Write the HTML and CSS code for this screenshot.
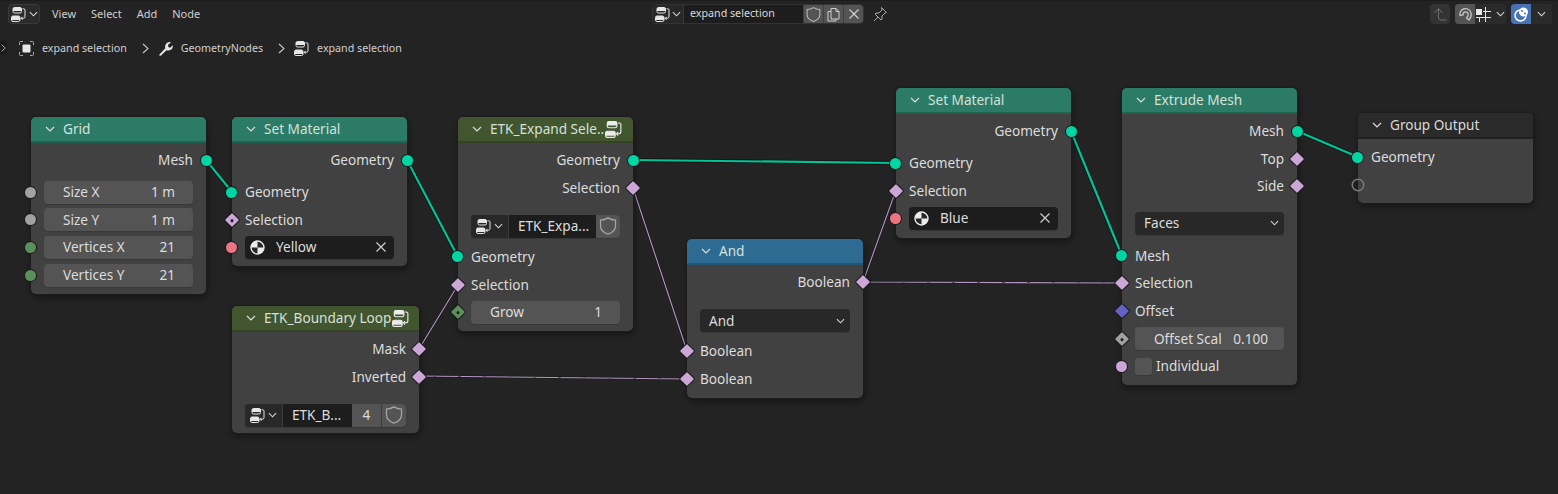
FILE: index.html
```html
<!DOCTYPE html>
<html lang="en">
<head>
<meta charset="utf-8">
<title>expand selection</title>
<link rel="stylesheet" href="styles.css">
</head>
<body>
<svg class="defs" width="0" height="0" aria-hidden="true">
  <symbol id="i-tree" viewBox="0 0 15 15">
    <rect x="2" y="0.5" width="8.5" height="5.5" rx="1.5" fill="none" stroke="currentColor"/>
    <path d="M2 4V2a1.500 1.500 0 0 1 1.500-1.500h5.500A1.500 1.500 0 0 1 10.500 2v2z" fill="currentColor"/>
    <rect x="0.500" y="9" width="8.500" height="5.500" rx="1.500" fill="none" stroke="currentColor"/>
    <path d="M0.500 13V10.500A1.500 1.500 0 0 1 2 9h5.500A1.500 1.500 0 0 1 9 10.500V13z" fill="currentColor"/>
    <path d="M11.500 1.800h1.200a1.300 1.300 0 0 1 1.300 1.300v6.400a1.800 1.800 0 0 1-1.800 1.800h-2M11.500 9.800l-1.300 1.500 1.300 1.500" fill="none" stroke="currentColor" stroke-width="1"/>
  </symbol>
  <symbol id="i-shield" viewBox="0 0 16 16">
    <path d="M8 1.500c2 1.300 4 1.800 6 1.800v4.700c0 3-2.500 5.300-6 6.500-3.500-1.200-6-3.500-6-6.500V3.300c2 0 4-.5 6-1.800z" fill="none" stroke="currentColor" stroke-width="1"/>
  </symbol>
  <symbol id="i-x" viewBox="0 0 12 12">
    <path d="M1.500 1.500l9 9M10.500 1.500l-9 9" fill="none" stroke="currentColor" stroke-width="1.200"/>
  </symbol>
  <symbol id="i-chev" viewBox="0 0 10 6">
    <path d="M1 1l4 4 4-4" fill="none" stroke="currentColor" stroke-width="1.200"/>
  </symbol>
  <symbol id="i-crumb" viewBox="0 0 7 11">
    <path d="M1 1l5 4.500-5 4.500" fill="none" stroke="currentColor" stroke-width="1.100"/>
  </symbol>
  <symbol id="i-mat" viewBox="0 0 15 15">
    <circle cx="7.500" cy="7.500" r="6.600" fill="#ededed" stroke="#ededed" stroke-width="1.200"/>
    <path d="M7.500 1.700a5.800 5.800 0 0 1 5.800 5.800H7.500zM7.500 7.500v5.800a5.800 5.800 0 0 1-5.800-5.800z" fill="#262626"/>
  </symbol>
</svg>

<header class="topbar">
  <div class="top-left">
    <div class="editor-btn">
      <svg class="ic15"><use href="#i-tree"/></svg>
      <svg class="ic-chev"><use href="#i-chev"/></svg>
    </div>
    <nav class="menu">
      <span>View</span><span>Select</span><span>Add</span><span>Node</span>
    </nav>
  </div>
  <div class="top-center">
    <div class="id-group">
      <div class="id-type"><svg class="ic15"><use href="#i-tree"/></svg><svg class="ic-chev"><use href="#i-chev"/></svg></div>
      <div class="id-name">expand selection</div>
      <div class="id-btn"><svg class="ic-shield-top"><use href="#i-shield"/></svg></div>
      <div class="id-btn">
        <svg class="ic15" viewBox="0 0 15 15"><path d="M5 1.500h5l3 3v7.500H5zM10 1.500v3h3M5 4.500H2v9.500h8v-2" fill="none" stroke="currentColor"/></svg>
      </div>
      <div class="id-btn"><svg class="ic-x"><use href="#i-x"/></svg></div>
    </div>
    <svg class="pin" viewBox="0 0 16 16"><path d="M9.500 1.500l5 5-1.500.5-3 3 0 3-1 1-3-3-4 4 4-4-3-3 1-1 3 0 3-3z" fill="none" stroke="currentColor"/></svg>
  </div>
  <div class="top-right">
    <div class="tool tool-off">
      <svg class="ic15" viewBox="0 0 15 15"><path d="M1.500 6l4-4.500 4 4.500M5.500 2v8.500a2.500 2.500 0 0 0 2.500 2.500h5.500" fill="none" stroke="currentColor"/></svg>
    </div>
    <div class="tool-group">
      <div class="tool tool-on">
        <svg class="ic15" viewBox="0 0 15 15"><path d="M2 8.500A5.500 5.500 0 0 1 13 6c.6 2.500-.3 5-2 7l-2.500-2c1.500-1.500 2-3 1.700-4.300A2.700 2.700 0 0 0 5 8z" fill="none" stroke="currentColor" stroke-width="1.400"/></svg>
      </div>
      <div class="tool tool-snap">
        <svg class="ic15" viewBox="0 0 15 15"><rect x="0" y="2" width="6" height="6" fill="#e8e8e8"/><path d="M9.500 0v15M3.500 10v5M0 10.500h15M7 4.500h8" fill="none" stroke="currentColor"/></svg>
        <svg class="ic-chev"><use href="#i-chev"/></svg>
      </div>
    </div>
    <div class="tool-group">
      <div class="tool tool-blue">
        <svg class="ic15" viewBox="0 0 15 15"><circle cx="6.500" cy="8.500" r="5.500" fill="none" stroke="#fff" stroke-width="1.500"/><circle cx="9.500" cy="5" r="4.500" fill="#fff"/><circle cx="8" cy="4" r="1" fill="#4772b3"/><circle cx="11" cy="6.500" r="1" fill="#4772b3"/></svg>
      </div>
      <div class="tool tool-chev"><svg class="ic-chev"><use href="#i-chev"/></svg></div>
    </div>
  </div>
</header>

<main class="canvas">
  <div class="side-tab"><svg class="ic-crumb-s"><use href="#i-crumb"/></svg></div>
  <div class="crumbs">
    <svg class="ic15 c-obj" viewBox="0 0 15 15"><rect x="3.500" y="3.500" width="8" height="8" rx="1" fill="currentColor"/><path d="M.5 4V1.500a1 1 0 0 1 1-1H4M11 .5h2.500a1 1 0 0 1 1 1V4M14.500 11v2.500a1 1 0 0 1-1 1H11M4 14.500H1.500a1 1 0 0 1-1-1V11" fill="none" stroke="#aaa"/></svg>
    <span class="c-text">expand selection</span>
    <svg class="ic-crumb"><use href="#i-crumb"/></svg>
    <svg class="ic15" viewBox="0 0 15 15"><path d="M1 14l6.300-6.700c-.6-2.200.1-4 1.600-5.300 1.300-1 2.800-1.300 4-.8L10 4.100l.3 2 1.800.6 2.600-2.500c.4 1.700-.2 3.300-1.500 4.400-1.300 1-3 1.300-4.700.7L3 14.500c-.7.500-1.500.3-2-.5z" fill="currentColor"/></svg>
    <span class="c-text">GeometryNodes</span>
    <svg class="ic-crumb"><use href="#i-crumb"/></svg>
    <svg class="ic15"><use href="#i-tree"/></svg>
    <span class="c-text">expand selection</span>
  </div>

  <svg class="links" viewBox="0 27 1558 467" width="1558" height="467" aria-hidden="true">
    <g class="wire-out">
      <path d="M206 160L232 192M407 160L458 257M633 160L896 163M1071 131L1122 256M1297 131L1358 157"/>
    </g>
    <g class="wire-green">
      <path d="M206 160L232 192M407 160L458 257M633 160L896 163M1071 131L1122 256M1297 131L1358 157"/>
    </g>
    <g class="wire-out-thin">
      <path d="M419 349L458 285M633 188L687 351M419 376L687 379M863 282L896 190M863 282L1122 283"/>
    </g>
    <g class="wire-bool">
      <path d="M419 349L458 285M633 188L687 351M419 376L687 379M863 282L896 190M863 282L1122 283"/>
    </g>
    <g class="wire-dash">
      <path d="M419 376L687 379M863 282L1122 283"/>
    </g>
  </svg>

  <section class="node n-grid">
    <div class="node-head geo"><svg class="ic-head"><use href="#i-chev"/></svg><span class="title">Grid</span></div>
    <div class="node-body">
      <div class="row out"><span>Mesh</span><i class="sock s-geo"></i></div>
      <div class="gap-4"></div>
      <div class="row"><i class="sock s-float"></i><div class="field"><span>Size X</span><span>1 m</span></div></div>
      <div class="row"><i class="sock s-float"></i><div class="field"><span>Size Y</span><span>1 m</span></div></div>
      <div class="row"><i class="sock s-int"></i><div class="field"><span>Vertices X</span><span>21</span></div></div>
      <div class="row"><i class="sock s-int"></i><div class="field"><span>Vertices Y</span><span>21</span></div></div>
    </div>
  </section>

  <section class="node n-mat1">
    <div class="node-head geo"><svg class="ic-head"><use href="#i-chev"/></svg><span class="title">Set Material</span></div>
    <div class="node-body">
      <div class="row out"><span>Geometry</span><i class="sock s-geo"></i></div>
      <div class="gap-4"></div>
      <div class="row"><i class="sock s-geo"></i><span>Geometry</span></div>
      <div class="row"><i class="sock s-bool dot"></i><span>Selection</span></div>
      <div class="row"><i class="sock s-mat"></i><div class="field-mat"><svg class="ic-mat"><use href="#i-mat"/></svg><span class="grow">Yellow</span><svg class="ic-x"><use href="#i-x"/></svg></div></div>
    </div>
  </section>

  <section class="node n-expand">
    <div class="node-head grp"><svg class="ic-head"><use href="#i-chev"/></svg><span class="title">ETK_Expand Sele..</span><svg class="ic-grp"><use href="#i-tree"/></svg></div>
    <div class="node-body">
      <div class="row out"><span>Geometry</span><i class="sock s-geo"></i></div>
      <div class="row out"><span>Selection</span><i class="sock s-bool"></i></div>
      <div class="gap-11"></div>
      <div class="row">
        <div class="grp-sel">
          <div class="gs-type"><svg class="ic15"><use href="#i-tree"/></svg><svg class="ic-chev"><use href="#i-chev"/></svg></div>
          <div class="gs-name">ETK_Expa...</div>
          <div class="gs-btn"><svg class="ic-shield"><use href="#i-shield"/></svg></div>
        </div>
      </div>
      <div class="gap-3"></div>
      <div class="row"><i class="sock s-geo"></i><span>Geometry</span></div>
      <div class="row"><i class="sock s-bool"></i><span>Selection</span></div>
      <div class="row"><i class="sock s-int dot"></i><div class="field"><span>Grow</span><span>1</span></div></div>
    </div>
  </section>

  <section class="node n-boundary">
    <div class="node-head grp"><svg class="ic-head"><use href="#i-chev"/></svg><span class="title">ETK_Boundary Loop</span><svg class="ic-grp"><use href="#i-tree"/></svg></div>
    <div class="node-body">
      <div class="row out"><span>Mask</span><i class="sock s-bool"></i></div>
      <div class="row out"><span>Inverted</span><i class="sock s-bool"></i></div>
      <div class="gap-11"></div>
      <div class="row">
        <div class="grp-sel">
          <div class="gs-type"><svg class="ic15"><use href="#i-tree"/></svg><svg class="ic-chev"><use href="#i-chev"/></svg></div>
          <div class="gs-name">ETK_B...</div>
          <div class="gs-count">4</div>
          <div class="gs-btn"><svg class="ic-shield"><use href="#i-shield"/></svg></div>
        </div>
      </div>
    </div>
  </section>

  <section class="node n-and">
    <div class="node-head cvt"><svg class="ic-head"><use href="#i-chev"/></svg><span class="title">And</span></div>
    <div class="node-body">
      <div class="row out"><span>Boolean</span><i class="sock s-bool"></i></div>
      <div class="gap-11"></div>
      <div class="row"><div class="drop"><span>And</span><svg class="ic-chev"><use href="#i-chev"/></svg></div></div>
      <div class="gap-3"></div>
      <div class="row"><i class="sock s-bool"></i><span>Boolean</span></div>
      <div class="row"><i class="sock s-bool"></i><span>Boolean</span></div>
    </div>
  </section>

  <section class="node n-mat2">
    <div class="node-head geo"><svg class="ic-head"><use href="#i-chev"/></svg><span class="title">Set Material</span></div>
    <div class="node-body">
      <div class="row out"><span>Geometry</span><i class="sock s-geo"></i></div>
      <div class="gap-4"></div>
      <div class="row"><i class="sock s-geo"></i><span>Geometry</span></div>
      <div class="row"><i class="sock s-bool"></i><span>Selection</span></div>
      <div class="row"><i class="sock s-mat"></i><div class="field-mat"><svg class="ic-mat"><use href="#i-mat"/></svg><span class="grow">Blue</span><svg class="ic-x"><use href="#i-x"/></svg></div></div>
    </div>
  </section>

  <section class="node n-extrude">
    <div class="node-head geo"><svg class="ic-head"><use href="#i-chev"/></svg><span class="title">Extrude Mesh</span></div>
    <div class="node-body">
      <div class="row out"><span>Mesh</span><i class="sock s-geo"></i></div>
      <div class="row out"><span>Top</span><i class="sock s-bool"></i></div>
      <div class="row out"><span>Side</span><i class="sock s-bool"></i></div>
      <div class="gap-9"></div>
      <div class="row"><div class="drop"><span>Faces</span><svg class="ic-chev"><use href="#i-chev"/></svg></div></div>
      <div class="gap-4"></div>
      <div class="row"><i class="sock s-geo"></i><span>Mesh</span></div>
      <div class="row"><i class="sock s-bool"></i><span>Selection</span></div>
      <div class="row"><i class="sock s-vec"></i><span>Offset</span></div>
      <div class="row"><i class="sock s-float-d dot"></i><div class="field field-tight"><span>Offset Scal</span><span>0.100</span></div></div>
      <div class="row"><i class="sock s-boolc"></i><i class="check"></i><span>Individual</span></div>
    </div>
  </section>

  <section class="node n-output">
    <div class="node-head out-head"><svg class="ic-head"><use href="#i-chev"/></svg><span class="title">Group Output</span></div>
    <div class="node-body body-low">
      <div class="row"><i class="sock s-geo"></i><span>Geometry</span></div>
      <div class="row"><i class="sock s-empty"></i></div>
    </div>
  </section>
</main>
</body>
</html>
```

FILE: styles.css
```css
* { box-sizing: border-box; }
html, body { margin: 0; height: 100%; }
body {
  width: 1558px; height: 494px; overflow: hidden;
  background: #232323; color: #d9d9d9;
  font-family: "Noto Sans", "Open Sans", sans-serif; font-size: 13.600px;
}
svg { display: block; flex: none; }
.defs { position: absolute; }
.ic15 { width: 15px; height: 15px; color: #e6e6e6; }
.ic-chev { width: 9px; height: 6px; color: #d8d8d8; }
.ic-x { width: 12px; height: 12px; color: #cfcfcf; }

/* top bar */
.topbar {
  height: 27px; display: flex; align-items: center; justify-content: space-between;
  background: #232323; border-top: 1px solid #1c1c1c; font-size: 10.700px; color: #cfcfcf;
}
.top-left, .top-right { flex: 1; display: flex; align-items: center; }
.top-left { padding-left: 8px; }
.top-right { justify-content: flex-end; padding-right: 6px; gap: 5px; }
.editor-btn {
  width: 32px; height: 20px; display: flex; align-items: center; justify-content: center; gap: 3px;
  background: #2b2b2b; border: 1px solid #3a3a3a; border-radius: 4px;
}
.menu { display: flex; gap: 15px; margin-left: 12px; font-size: 11px; }
.menu span { margin-bottom: 2px; }
.top-center { display: flex; align-items: center; padding-right: 20px; }
.id-group {
  display: flex; height: 20px; width: 212px; border-radius: 4px; overflow: hidden;
  border: 1px solid #333; background: #1d1d1d;
}
.id-type {
  width: 31px; display: flex; align-items: center; justify-content: center; gap: 2px;
  background: #282828; border-right: 1px solid #3a3a3a;
}
.id-name { flex: 1; padding-left: 6px; line-height: 17px; color: #d9d9d9; }
.id-btn {
  width: 20px; display: flex; align-items: center; justify-content: center; background: #545454;
  border-left: 1px solid #3f3f3f;
}
.id-btn .ic15 { color: #cfcfcf; }
.ic-shield-top { width: 17px; height: 17px; color: #b8b8b8; }
.pin { width: 16px; height: 16px; margin-left: 8px; color: #a8a8a8; }
.tool-group { display: flex; border-radius: 4px; overflow: hidden; box-shadow: inset 0 0 0 1px #383838; }
.tool {
  height: 20px; display: flex; align-items: center; justify-content: center; gap: 5px;
  background: #2b2b2b;
}
.tool-off { width: 20px; background: #333; border-radius: 4px; }
.tool-off .ic15 { color: #6e6e6e; }
.tool-on { width: 20px; background: #545454; }
.tool-on .ic15 { color: #bdbdbd; }
.tool-snap { width: 31px; }
.tool-blue { width: 20px; background: #4772b3; }
.tool-chev { width: 21px; }

/* canvas */
.canvas { position: relative; width: 1558px; height: 467px; }
.side-tab {
  position: absolute; left: 0; top: 14px; width: 7px; height: 14px; background: #1c1c1c;
  border-radius: 0 3px 3px 0; display: flex; align-items: center;
}
.ic-crumb-s { width: 5px; height: 8px; margin-left: 1px; color: #c8c8c8; }
.crumbs {
  position: absolute; left: 19px; top: 13px; height: 16px; display: flex; align-items: center;
  font-size: 10.700px; color: #d0d0d0;
}
.c-text { margin: 0 0 0 8px; }
.ic-crumb { width: 7px; height: 11px; margin: 0 9px 0 15px; color: #c8c8c8; }
.links { position: absolute; left: 0; top: 0; fill: none; }
.wire-out { stroke: #151515; stroke-width: 4; }
.wire-green { stroke: #00c496; stroke-width: 2.200; }
.wire-out-thin { stroke: #1a1a1a; stroke-width: 2.400; }
.wire-bool { stroke: #b597c5; stroke-width: 1.100; }
.wire-dash { stroke: #5c4e64; stroke-width: 1.100; stroke-dasharray: 3 22; stroke-dashoffset: -14; }

/* nodes */
.node {
  position: absolute; background: #414141; border-radius: 5px;
  box-shadow: 0 0 0 1px #1c1c1c, 1px 3px 6px rgba(0,0,0,.45);
  color: #dcdcdc;
}
.n-grid { left: 31px; top: 90px; width: 175px; height: 177px; }
.n-mat1 { left: 232px; top: 90px; width: 175px; height: 149px; }
.n-expand { left: 458px; top: 90px; width: 175px; height: 214px; }
.n-boundary { left: 232px; top: 279px; width: 187px; height: 127px; }
.n-and { left: 687px; top: 212px; width: 176px; height: 159px; }
.n-mat2 { left: 896px; top: 61px; width: 175px; height: 150px; }
.n-extrude { left: 1122px; top: 61px; width: 175px; height: 297px; }
.n-output { left: 1358px; top: 86px; width: 175px; height: 90px; }

.node-head {
  height: 26px; display: flex; align-items: center; padding-left: 14px;
  border-radius: 5px 5px 0 0; border-bottom: 2px solid rgba(0,0,0,.2); color: #d4e0da;
}
.geo { background: #2b7b66; }
.grp { background: #41552f; }
.cvt { background: #2d6b92; }
.out-head { background: #2a2a2a; color: #d9d9d9; }
.ic-head { width: 10px; height: 6px; color: #dcdcdc; }
.title { margin: 0 0 2px 8px; white-space: nowrap; }
.ic-grp { width: 17px; height: 17px; color: #ececec; position: absolute; right: 11px; top: 4px; }
.n-boundary .ic-grp { right: 10px; }

.node-body { padding: 3.200px 13px 0; }
.body-low { padding-top: 4.500px; }
.row {
  position: relative; height: 27.670px; display: flex; align-items: center;
}
.row.out { justify-content: flex-end; }
.row > span, .field span, .field-mat span, .drop span { margin-bottom: 1px; }
.gap-3 { height: 3px; }
.gap-4 { height: 4.500px; }
.gap-9 { height: 9.500px; }
.gap-11 { height: 11px; }

.sock { position: absolute; top: 50%; width: 11px; height: 11px; margin-top: -5.500px; left: -19px; border-radius: 50%; box-shadow: 0 0 0 1px #1a1a1a; }
.row.out .sock { left: auto; right: -19px; }
.s-geo { background: #00d6a3; }
.s-float { background: #a1a1a1; }
.s-int { background: #5c8f5c; }
.s-mat { background: #eb7582; }
.s-boolc { background: #cca6d6; }
.s-empty { background: transparent; box-shadow: 0 0 0 1.500px #7a7a7a; width: 10px; height: 10px; margin-top: -5px; left: -18px; }
.s-bool, .s-vec, .s-float-d {
  border-radius: 1px; width: 10px; height: 10px; margin-top: -5px; left: -18px; transform: rotate(45deg);
}
.row.out .s-bool { right: -18px; }
.s-bool { background: #cca6d6; }
.s-vec { background: #6363c7; }
.s-float-d { background: #a1a1a1; }
.s-int.dot {
  border-radius: 1px; width: 10px; height: 10px; margin-top: -5px; left: -18px; transform: rotate(45deg);
}
.dot::after {
  content: ""; position: absolute; left: 3.500px; top: 3.500px; width: 3px; height: 3px; border-radius: 50%; background: #1d1d1d;
}

.field {
  flex: 1; height: 23px; background: #545454; border-radius: 4px; display: flex;
  align-items: center; justify-content: space-between; padding: 0 18px 0 19px;
  box-shadow: 0 1px 1px rgba(0,0,0,.15);
}
.field-tight { padding-right: 16px; }
.field-mat {
  flex: 1; height: 23px; background: #1d1d1d; border-radius: 4px; display: flex;
  align-items: center; padding: 0 7px 0 5px; box-shadow: 0 1px 1px rgba(0,0,0,.15);
}
.ic-mat { width: 15px; height: 15px; margin-right: 11px; }
.grow { flex: 1; }
.grp-sel {
  flex: 1; height: 23px; display: flex; border-radius: 4px; overflow: hidden; background: #2b2b2b;
  box-shadow: 0 1px 1px rgba(0,0,0,.15);
}
.gs-type {
  width: 38px; flex: none; display: flex; align-items: center; justify-content: center; gap: 3px; background: #282828;
  border-right: 1px solid #3a3a3a;
}
.gs-name { flex: 1; background: #1d1d1d; line-height: 21px; padding-left: 9px; white-space: nowrap; }
.gs-count { width: 30px; background: #545454; line-height: 21px; text-align: center; border-right: 1px solid #3c3c3c; }
.gs-btn { width: 24px; flex: none; background: #545454; display: flex; align-items: center; justify-content: center; }
.ic-shield { width: 20px; height: 20px; color: #a6a6a6; }
.drop {
  flex: 1; height: 23px; background: #282828; border-radius: 4px; display: flex;
  align-items: center; justify-content: space-between; padding: 0 5px 0 9px;
  box-shadow: 0 1px 1px rgba(0,0,0,.15);
}
.check { width: 17px; height: 17px; background: #545454; border-radius: 3px; margin-right: 4px; box-shadow: 0 1px 1px rgba(0,0,0,.15); }
```
